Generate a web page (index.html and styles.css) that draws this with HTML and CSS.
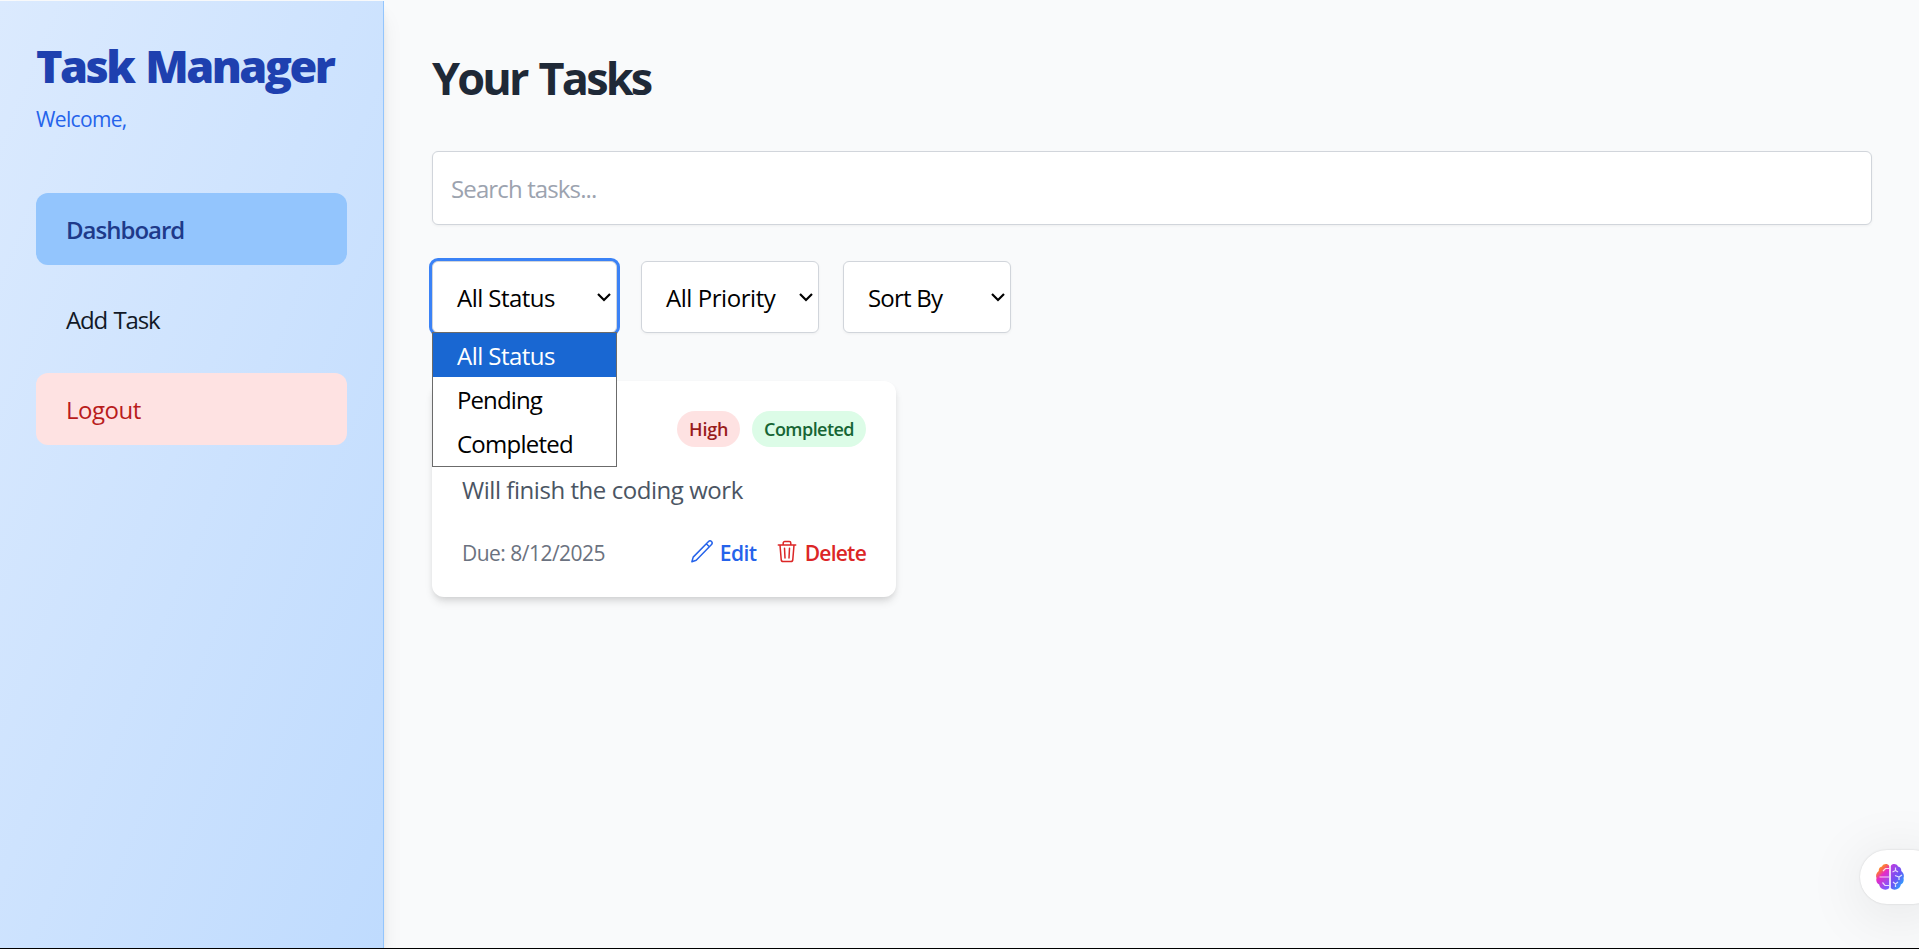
FILE: index.html
```html
<!DOCTYPE html>
<html lang="en">
<head>
<meta charset="utf-8">
<title>Task Manager</title>
<link rel="stylesheet" href="styles.css">
</head>
<body>
<div class="app">
  <aside class="sidebar">
    <h1 class="brand">Task Manager</h1>
    <p class="welcome">Welcome,</p>
    <nav class="nav">
      <a class="nav-item active">Dashboard</a>
      <a class="nav-item add">Add Task</a>
      <a class="nav-item logout">Logout</a>
    </nav>
  </aside>
  <main class="main">
    <h2 class="title">Your Tasks</h2>
    <div class="search">Search tasks...</div>
    <div class="filters">
      <div class="select status open">All Status
        <svg class="chev" viewBox="0 0 16 10"><path d="M2 2l6 6 6-6"/></svg>
        <div class="menu">
          <div class="option chosen">All Status</div>
          <div class="option pending">Pending</div>
          <div class="option done">Completed</div>
        </div>
      </div>
      <div class="select priority">All Priority<svg class="chev" viewBox="0 0 16 10"><path d="M2 2l6 6 6-6"/></svg></div>
      <div class="select sort">Sort By<svg class="chev" viewBox="0 0 16 10"><path d="M2 2l6 6 6-6"/></svg></div>
    </div>
    <article class="card">
      <div class="badges">
        <b class="badge high">High</b>
        <b class="badge completed">Completed</b>
      </div>
      <p class="desc">Will finish the coding work</p>
      <div class="foot">
        <div class="due">Due: 8/12/2025</div>
        <div class="action edit">
          <svg width="24" height="24" viewBox="0 0 24 24"><path d="M1.900 22.800l1.300-4.700L18.300 2.700c1-1 2.400-1 3.200-.2.800.8.800 2.200-.2 3.200L6.200 21.200zM16.300 4.700l3 3"/></svg>
          <span>Edit</span></div>
        <div class="action delete">
          <svg width="20" height="24" viewBox="0 0 20 24"><path d="M1.300 6h17.400M3 6l1.200 14.600a2 2 0 0 0 2 1.900h7.600a2 2 0 0 0 2-1.900L17 6M6.200 6V4c0-.8.7-1.500 1.500-1.500h4.600c.8 0 1.500.7 1.500 1.500v2M7.500 9.200l.5 9.800M12.500 9.200L12 19"/></svg>
          <span>Delete</span></div>
      </div>
    </article>
  </main>
  <div class="assistant">
    <svg width="28" height="28" viewBox="0 0 28 28">
      <defs>
        <linearGradient id="lobe-left" x1=".2" y1="0" x2=".7" y2="1"><stop offset="0" stop-color="#ffb01f"/><stop offset=".25" stop-color="#fb7040"/><stop offset=".45" stop-color="#e62bc8"/><stop offset="1" stop-color="#7a5cff"/></linearGradient>
        <linearGradient id="lobe-right" x1="0" y1="0" x2=".8" y2="1"><stop offset="0" stop-color="#c23be0"/><stop offset=".55" stop-color="#6a55f5"/><stop offset="1" stop-color="#22b0ff"/></linearGradient>
      </defs>
      <path fill="url(#lobe-left)" d="M13.200 3c-1.200-2.500-5.700-2.700-7.200.4-2.200.3-3.600 2.200-3.200 4.600C.6 9.300-.6 12.700.5 15c-.8 3 .4 5.500 2.700 6.600.3 4.600 7 7 10 3.500z"/>
      <path fill="url(#lobe-right)" d="M14.800 3c1.200-2.500 5.700-2.700 7.200.4 2.200.3 3.600 2.200 3.200 4.600 2.200 1.300 3.400 4.700 2.300 7 .8 3-.4 5.500-2.700 6.600-.3 4.600-7 7-10 3.500z"/>
      <path class="folds" d="M13 5.500H9.500L7 8M3.500 14H13M6.500 19.500L9 22.500h4M16.500 9l3-1.500V4.500M19.500 7.500L22 9M19 12.500l4 1.500 3-2M23 14v3M17 19l2.500 2 2.500-2M19.500 21v3"/>
    </svg>
  </div>
</div>
</body>
</html>
```
FILE: styles.css
```css
* { box-sizing: border-box; }
body { margin: 0; font-family: "Open Sans", "Noto Sans", sans-serif; font-size: 24px; line-height: 36px; color: #000; background: #f9fafb; white-space: nowrap; }
h1, h2, p { margin: 0; }
.app { position: relative; display: flex; height: 949px; padding-top: 1px; overflow: hidden; border-bottom: 1px solid #000; background: #f9fafb; }
.sidebar { flex: none; width: 384px; padding: 35px 36px; border-right: 1px solid #93c5fd; background: linear-gradient(to bottom right, #dbeafe, #bfdbfe); box-shadow: 0 15px 22px -4px rgba(0,0,0,.1), 0 6px 9px -3px rgba(0,0,0,.1); }
.brand { font-size: 45px; line-height: 60px; font-weight: 800; letter-spacing: -2.550px; word-spacing: 2.750px; color: #1e40af; }
.welcome { margin-top: 8px; font-size: 21px; line-height: 30px; letter-spacing: -.65px; color: #2563eb; }
.nav { margin-top: 59px; display: flex; flex-direction: column; gap: 18px; }
.nav-item { height: 72px; padding: 19px 30px 17px; border-radius: 12px; color: #111827; }
.active { background: #93c5fd; color: #1e3a8a; font-weight: 600; letter-spacing: -1px; }
.add { letter-spacing: -1.150px; word-spacing: 1.200px; }
.logout { background: #fee2e2; color: #b91c1c; letter-spacing: -.5px; }
.main { flex: 1; padding: 47px 47px 0 48px; }
.title { font-size: 45px; line-height: 60px; font-weight: 700; letter-spacing: -2.850px; word-spacing: 3.200px; color: #1f2937; }
.search { height: 74px; margin-top: 43px; padding: 19px 18px 17px; border: 1px solid #d1d5db; border-radius: 6px; background: #fff; color: #9ca3af; letter-spacing: -.87px; box-shadow: 0 1px 3px rgba(0,0,0,.05); }
.filters { display: flex; gap: 24px; margin-top: 36px; }
.select { position: relative; height: 72px; padding: 18px 24px; border: 1px solid #d1d5db; border-radius: 6px; background: #fff; box-shadow: 0 1px 3px rgba(0,0,0,.05); }
.status { width: 185px; letter-spacing: -.54px; }
.priority { width: 178px; letter-spacing: -.45px; }
.sort { width: 168px; letter-spacing: -.8px; }
.open { box-shadow: 0 0 0 3px #3b82f6; }
.chev { position: absolute; right: 4px; top: 30px; width: 16px; height: 10px; fill: none; stroke: #000; stroke-width: 2.200; }
.menu { position: absolute; z-index: 2; left: -1px; top: 70px; width: 185px; height: 135px; border: 1px solid #6b6b6b; background: #fff; }
.option { height: 44px; padding: 5px 24px 3px; }
.chosen { background: #1967d2; color: #fff; }
.pending { letter-spacing: -.9px; }
.done { letter-spacing: -.75px; }
.card { width: 464px; height: 216px; margin-top: 48px; padding: 30px; border-radius: 12px; background: #fff; box-shadow: 0 6px 9px -1px rgba(0,0,0,.1), 0 3px 6px -2px rgba(0,0,0,.1); }
.badges { display: flex; justify-content: flex-end; gap: 12px; }
.badge { height: 36px; padding: 6px 12px; border-radius: 18px; font-size: 18px; line-height: 24px; font-weight: 600; }
.high { background: #fee2e2; color: #991b1b; letter-spacing: -.25px; }
.completed { background: #dcfce7; color: #166534; letter-spacing: -.55px; }
.desc { margin-top: 25px; color: #4b5563; letter-spacing: -.45px; }
.foot { display: flex; margin-top: 30px; font-size: 21px; line-height: 30px; }
.due { flex: 1; color: #6b7280; letter-spacing: -.52px; }
.action { display: flex; font-weight: 600; }
.action svg { flex: none; margin-top: 1px; fill: none; stroke: currentColor; stroke-width: 1.500; stroke-linejoin: round; stroke-linecap: round; }
.edit { gap: 5.500px; color: #2563eb; letter-spacing: -.5px; }
.delete { gap: 7.500px; margin-left: 20.500px; color: #dc2626; letter-spacing: -.75px; }
.assistant { position: absolute; left: 1860px; top: 850px; width: 80px; height: 54px; padding: 13px 16px; border-radius: 27px; background: #fff; box-shadow: 0 0 2px rgba(0,0,0,.15), 0 8px 60px rgba(0,0,0,.1); }
.assistant svg { display: block; }
.folds { fill: none; stroke: #fff; stroke-width: 1.200; opacity: .8; }
```
